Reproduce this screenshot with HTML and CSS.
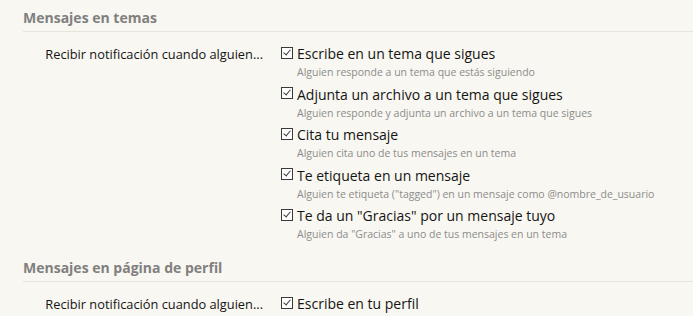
FILE: index.html
```html
<!DOCTYPE html>
<html>
<head>
  <title>Preferencias de alertas</title>
  <link rel="stylesheet" href="styles.css">
</head>
<body>
  <!-- Mensajes en temas -->
  <h3 class="section-title">Mensajes en temas</h3>
  <div class="pref-row">
    <div class="pref-label">Recibir notificación cuando alguien...</div>
    <ul class="pref-options">
      <li>
        <label><span class="check"></span>Escribe en un tema que sigues</label>
        <p class="hint">Alguien responde a un tema que estás siguiendo</p>
      </li>
      <li>
        <label><span class="check"></span>Adjunta un archivo a un tema que sigues</label>
        <p class="hint">Alguien responde y adjunta un archivo a un tema que sigues</p>
      </li>
      <li>
        <label><span class="check"></span>Cita tu mensaje</label>
        <p class="hint">Alguien cita uno de tus mensajes en un tema</p>
      </li>
      <li>
        <label><span class="check"></span>Te etiqueta en un mensaje</label>
        <p class="hint">Alguien te etiqueta ("tagged") en un mensaje como @nombre_de_usuario</p>
      </li>
      <li>
        <label><span class="check"></span>Te da un "Gracias" por un mensaje tuyo</label>
        <p class="hint">Alguien da "Gracias" a uno de tus mensajes en un tema</p>
      </li>
    </ul>
  </div>

  <!-- Mensajes en página de perfil -->
  <h3 class="section-title">Mensajes en página de perfil</h3>
  <div class="pref-row">
    <div class="pref-label">Recibir notificación cuando alguien...</div>
    <ul class="pref-options">
      <li>
        <label><span class="check"></span>Escribe en tu perfil</label>
      </li>
    </ul>
  </div>
</body>
</html>
```

FILE: styles.css
```css
body {
  margin: 0;
  background: #f8f7f1;
  font-family: "Open Sans", sans-serif;
  color: #141414;
  overflow: hidden;
}

.section-title {
  margin: 0 0 0 23px;
  padding: 8px 0 4px;
  font-size: 14px;
  line-height: 19px;
  font-weight: bold;
  color: #808080;
  border-bottom: 1px solid #e6e5da;
}

.pref-row {
  display: flex;
  gap: 18px;
  padding: 13px 0 9px;
}

.pref-label {
  width: 263px;
  text-align: right;
  font-size: 12.8px;
  line-height: 18px;
}

.pref-options {
  list-style: none;
  margin: 0;
  padding: 0;
  display: flex;
  flex-direction: column;
  gap: 6.5px;
}

.pref-options label {
  display: flex;
  align-items: center;
  font-size: 14px;
  line-height: 18px;
}

.check {
  width: 10px;
  height: 10px;
  border: 1px solid #3a3a3a;
  background: #fff;
  margin: -3px 4px 0 0;
  position: relative;
}

.check::after {
  content: '';
  position: absolute;
  left: 3px;
  top: 0;
  width: 3px;
  height: 6px;
  border: solid #3a3a3a;
  border-width: 0 1px 1px 0;
  transform: rotate(40deg);
}

.hint {
  margin: 2px 0 0 16px;
  font-size: 10.5px;
  line-height: 14px;
  color: #8c8c8c;
}
```
